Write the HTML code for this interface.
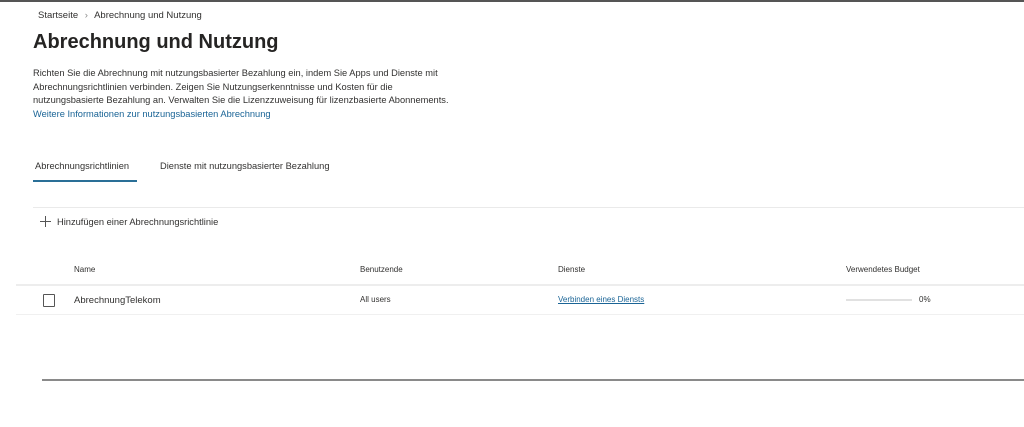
<!DOCTYPE html>
<html><head><style>
body{margin:0;width:1024px;height:427px;background:#fff;font-family:"Liberation Sans",sans-serif;color:#323130;position:relative;overflow:hidden;border-top:2px solid #555;box-sizing:border-box}
.a{position:absolute;white-space:nowrap}
</style></head><body>
<div class="a" style="left:38px;top:8px;font-size:9.5px">Startseite <span style="color:#888;margin:0 4px">&#x203A;</span> Abrechnung und Nutzung</div>
<div class="a" style="left:33px;top:29px;font-size:20px;font-weight:bold;color:#252423">Abrechnung und Nutzung</div>
<div class="a" style="left:33px;top:65px;font-size:9.3px;line-height:13.6px">Richten Sie die Abrechnung mit nutzungsbasierter Bezahlung ein, indem Sie Apps und Dienste mit<br>Abrechnungsrichtlinien verbinden. Zeigen Sie Nutzungserkenntnisse und Kosten für die<br>nutzungsbasierte Bezahlung an. Verwalten Sie die Lizenzzuweisung für lizenzbasierte Abonnements.<br><span style="color:#1a6496">Weitere Informationen zur nutzungsbasierten Abrechnung</span></div>
<div class="a" style="left:35px;top:159px;font-size:9.3px">Abrechnungsrichtlinien</div>
<div class="a" style="left:33px;top:178px;width:104px;height:2px;background:#2a6f97"></div>
<div class="a" style="left:160px;top:159px;font-size:9.3px">Dienste mit nutzungsbasierter Bezahlung</div>
<div class="a" style="left:33px;top:205px;width:991px;height:1px;background:#eaeaea"></div>
<div class="a" style="left:40px;top:219px;width:11px;height:1px;background:#555"></div>
<div class="a" style="left:45px;top:214px;width:1px;height:11px;background:#555"></div>
<div class="a" style="left:57px;top:215px;font-size:9.3px">Hinzufügen einer Abrechnungsrichtlinie</div>
<div class="a" style="left:74px;top:263px;font-size:8px">Name</div>
<div class="a" style="left:360px;top:263px;font-size:8px">Benutzende</div>
<div class="a" style="left:558px;top:263px;font-size:8px">Dienste</div>
<div class="a" style="left:846px;top:263px;font-size:8px">Verwendetes Budget</div>
<div class="a" style="left:16px;top:282px;width:1008px;height:2px;background:#ededed"></div>
<div class="a" style="left:43px;top:292px;width:10px;height:11px;border:1px solid #555;border-radius:1px"></div>
<div class="a" style="left:74px;top:293px;font-size:9.5px">AbrechnungTelekom</div>
<div class="a" style="left:360px;top:293px;font-size:8px">All users</div>
<div class="a" style="left:558px;top:293px;font-size:8px;color:#1a6496;text-decoration:underline">Verbinden eines Diensts</div>
<div class="a" style="left:846px;top:297px;width:66px;height:2px;background:#e1e1e1"></div>
<div class="a" style="left:919px;top:293px;font-size:8px">0%</div>
<div class="a" style="left:16px;top:312px;width:1008px;height:1px;background:#f0f0f0"></div>
<div class="a" style="left:42px;top:377px;width:982px;height:2px;background:#8a8a8a"></div>
</body></html>
